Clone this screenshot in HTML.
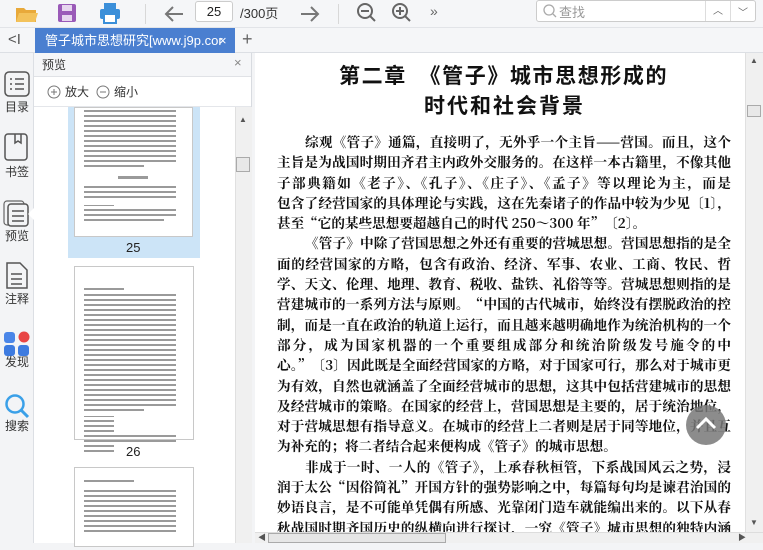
<!DOCTYPE html>
<html><head><meta charset="utf-8"><style>
*{margin:0;padding:0;box-sizing:border-box}
body{width:763px;height:543px;overflow:hidden;background:#f3f4f6;font-family:"Liberation Sans","Noto Sans CJK SC",sans-serif;position:relative}
.abs{position:absolute}
.tb{left:0;top:0;width:763px;height:28px;background:#f5f6f8;border-bottom:1px solid #e2e4e8}
.tabbar{left:0;top:28px;width:763px;height:25px;background:#f5f6f8;border-bottom:1px solid #dcdfe4}
.tab{left:35px;top:28px;width:200px;height:25px;background:#4a7fd0;color:#fff;font-size:13px;line-height:25px;padding-left:10px;white-space:nowrap;overflow:hidden}
.side{left:0;top:53px;width:34px;height:490px;background:#f3f4f6;border-right:1px solid #dcdfe4}
.side .lb{position:absolute;left:0;width:34px;text-align:center;font-size:12px;color:#333}
.panel{left:34px;top:53px;width:218px;height:490px;background:#fff;border-right:1px solid #d8dbe0}
.content{left:255px;top:53px;width:490px;height:479px;background:#fff}
.txt{position:absolute;left:277px;width:454px;font-family:"Noto Serif CJK SC","Liberation Serif",serif;font-weight:bold;font-size:13.6px;color:#111;line-height:20.3px}
.txt div{text-align:justify;text-align-last:justify;white-space:nowrap;height:20.3px;overflow:hidden}
.txt div.i{padding-left:28px}
.txt div.n{text-align-last:left}
.h{position:absolute;font-family:"Noto Sans CJK SC",sans-serif;font-weight:bold;font-size:21px;color:#111;white-space:nowrap}
.thumb{position:absolute;background:#fff;border:1px solid #c8c8c8}
</style></head><body>
<div class="abs tb"></div>
<svg class="abs" style="left:14px;top:2px" width="26" height="22"><path d="M2 6h8l2 2h10v12H2z" fill="#e8a93a"/><path d="M5 11h19l-3 9H2z" fill="#f3c25b"/></svg>
<svg class="abs" style="left:57px;top:3px" width="20" height="20"><rect x="1" y="1" width="18" height="18" rx="2" fill="#9a5ab8"/><rect x="5" y="2" width="10" height="6" fill="#e7d6ef"/><rect x="5" y="12" width="10" height="6" fill="#e7d6ef"/></svg>
<svg class="abs" style="left:99px;top:2px" width="22" height="22"><rect x="5" y="1" width="12" height="6" fill="#3b8fd9"/><rect x="1" y="7" width="20" height="10" rx="2" fill="#3b8fd9"/><rect x="5" y="12" width="12" height="9" fill="#fff" stroke="#3b8fd9" stroke-width="2"/></svg>
<div class="abs" style="left:145px;top:4px;width:1px;height:20px;background:#d8d8d8"></div>
<svg class="abs" style="left:163px;top:4px" width="22" height="20"><path d="M20 10H3M10 3L3 10l7 7" fill="none" stroke="#777" stroke-width="2"/></svg>
<div class="abs" style="left:195px;top:1px;width:38px;height:21px;border:1px solid #ccc;border-radius:3px;background:#fff;font-size:13px;text-align:center;line-height:19px;color:#222">25</div>
<div class="abs" style="left:240px;top:3px;font-size:13px;color:#333">/300页</div>
<svg class="abs" style="left:299px;top:4px" width="22" height="20"><path d="M2 10h17M12 3l7 7-7 7" fill="none" stroke="#777" stroke-width="2"/></svg>
<div class="abs" style="left:338px;top:4px;width:1px;height:20px;background:#d8d8d8"></div>
<svg class="abs" style="left:356px;top:2px" width="22" height="22"><circle cx="9" cy="9" r="7" fill="none" stroke="#666" stroke-width="2"/><path d="M5 9h8M14 14l5 5" stroke="#666" stroke-width="2"/></svg>
<svg class="abs" style="left:391px;top:2px" width="22" height="22"><circle cx="9" cy="9" r="7" fill="none" stroke="#666" stroke-width="2"/><path d="M5 9h8M9 5v8M14 14l5 5" stroke="#666" stroke-width="2"/></svg>
<div class="abs" style="left:430px;top:3px;font-size:14px;color:#666">»</div>
<div class="abs" style="left:536px;top:0px;width:220px;height:22px;border:1px solid #ccc;border-radius:3px;background:#fff"></div>
<svg class="abs" style="left:542px;top:3px" width="16" height="16"><circle cx="7" cy="7" r="5" fill="none" stroke="#aaa" stroke-width="1.3"/><path d="M11 11l3 3" stroke="#aaa" stroke-width="1.3"/></svg>
<div class="abs" style="left:559px;top:2px;font-size:13px;color:#999">查找</div>
<div class="abs" style="left:705px;top:1px;width:1px;height:20px;background:#ddd"></div>
<div class="abs" style="left:730px;top:1px;width:1px;height:20px;background:#ddd"></div>
<div class="abs" style="left:713px;top:2px;font-size:10px;color:#666">︿</div>
<div class="abs" style="left:738px;top:4px;font-size:10px;color:#666">﹀</div>

<div class="abs tabbar"></div>
<div class="abs" style="left:8px;top:31px;font-size:15px;color:#555">&lt;I</div>
<div class="abs tab">管子城市思想研究[www.j9p.cor <span style="position:absolute;left:184px">×</span></div>
<div class="abs" style="left:242px;top:29px;font-size:18px;color:#666">+</div>

<div class="abs side">
<svg class="abs" style="left:4px;top:18px" width="26" height="26"><rect x="1" y="1" width="24" height="24" rx="4" fill="none" stroke="#555" stroke-width="1.5"/><path d="M6 8h2M11 8h9M6 13h2M11 13h9M6 18h2M11 18h9" stroke="#555" stroke-width="1.6"/></svg>
<div class="lb" style="top:45px">目录</div>
<svg class="abs" style="left:4px;top:80px" width="26" height="28"><rect x="1" y="1" width="22" height="26" rx="3" fill="none" stroke="#555" stroke-width="1.5"/><path d="M11 1v9l3-2 3 2V1" fill="none" stroke="#555" stroke-width="1.5"/></svg>
<div class="lb" style="top:110px">书签</div>
<svg class="abs" style="left:3px;top:147px" width="28" height="28"><rect x="1" y="1" width="20" height="24" rx="3" fill="none" stroke="#666" stroke-width="1.2"/><rect x="5" y="4" width="20" height="22" rx="3" fill="#f3f4f6" stroke="#555" stroke-width="1.5"/><path d="M9 11h12M9 16h12M9 21h12" stroke="#555" stroke-width="1.5"/></svg>
<div class="abs" style="left:28px;top:155px;width:0;height:0;border-top:6px solid transparent;border-bottom:6px solid transparent;border-right:6px solid #fff"></div>
<div class="lb" style="top:174px">预览</div>
<svg class="abs" style="left:5px;top:209px" width="24" height="28"><path d="M2 1h13l7 7v18H2z" fill="none" stroke="#555" stroke-width="1.5"/><path d="M6 12h11M6 17h11M6 22h11" stroke="#555" stroke-width="1.5"/></svg>
<div class="lb" style="top:237px">注释</div>
<svg class="abs" style="left:3px;top:278px" width="28" height="26"><rect x="1" y="1" width="11" height="11" rx="3" fill="#4a86e8"/><circle cx="21" cy="6" r="5.5" fill="#e84545"/><rect x="1" y="14" width="11" height="11" rx="3" fill="#3d7be0"/><rect x="15" y="14" width="11" height="11" rx="3" fill="#3d7be0"/></svg>
<div class="lb" style="top:300px">发现</div>
<svg class="abs" style="left:4px;top:340px" width="26" height="26"><circle cx="11" cy="11" r="8.5" fill="none" stroke="#3aa0e8" stroke-width="2.5"/><path d="M17 17l7 7" stroke="#3aa0e8" stroke-width="3"/></svg>
<div class="lb" style="top:364px">搜索</div>
</div>

<div class="abs panel">
<div class="abs" style="left:0;top:0;width:217px;height:24px;background:#f5f6f8;border-bottom:1px solid #e0e2e6"></div>
<div class="abs" style="left:8px;top:3px;font-size:12px;color:#333">预览</div>
<div class="abs" style="left:200px;top:2px;font-size:13px;color:#888">×</div>
<svg class="abs" style="left:13px;top:32px" width="14" height="14"><circle cx="7" cy="7" r="6" fill="none" stroke="#777"/><path d="M4 7h6M7 4v6" stroke="#777"/></svg>
<div class="abs" style="left:31px;top:30px;font-size:12px;color:#333">放大</div>
<svg class="abs" style="left:62px;top:32px" width="14" height="14"><circle cx="7" cy="7" r="6" fill="none" stroke="#777"/><path d="M4 7h6" stroke="#777"/></svg>
<div class="abs" style="left:80px;top:30px;font-size:12px;color:#333">缩小</div>
<div class="abs" style="left:0;top:53px;width:217px;height:1px;background:#e4e6ea"></div>
<div class="abs" style="left:34px;top:54px;width:132px;height:151px;background:#cce4f7"></div>
<div class="thumb" style="left:40px;top:54px;width:119px;height:130px"></div>
<div class="abs" style="left:92px;top:187px;font-size:13px;color:#222">25</div>
<div class="thumb" style="left:40px;top:213px;width:120px;height:174px"></div>
<div class="abs" style="left:92px;top:391px;font-size:13px;color:#222">26</div>
<div class="thumb" style="left:40px;top:414px;width:120px;height:80px"></div>
<div class="abs" style="left:201px;top:54px;width:17px;height:436px;background:#f0f0f0;border-left:1px solid #e0e0e0"></div>
<div class="abs" style="left:202px;top:104px;width:14px;height:15px;background:#e8e8e8;border:1px solid #aaa"></div>
<div class="abs" style="left:205px;top:62px;font-size:8px;color:#555">▲</div>
</div>
<svg class="abs" style="left:80px;top:110px" width="110" height="440">
<g fill="#9a9a9a">
<rect x="4" y="0" width="92" height="2"/><rect x="4" y="5" width="92" height="2"/><rect x="4" y="10" width="92" height="2"/><rect x="4" y="15" width="92" height="2"/><rect x="4" y="20" width="92" height="2"/><rect x="4" y="25" width="92" height="2"/><rect x="4" y="30" width="92" height="2"/><rect x="4" y="35" width="92" height="2"/><rect x="4" y="40" width="92" height="2"/><rect x="4" y="45" width="92" height="2"/><rect x="4" y="50" width="92" height="2"/><rect x="4" y="55" width="60" height="2"/>
<rect x="38" y="66" width="30" height="3"/>
<rect x="4" y="76" width="92" height="2"/><rect x="4" y="81" width="92" height="2"/><rect x="4" y="86" width="92" height="2"/>
<rect x="4" y="95" width="30" height="1"/>
<rect x="4" y="99" width="92" height="2"/><rect x="4" y="104" width="92" height="2"/><rect x="4" y="109" width="80" height="2"/>
<rect x="4" y="178" width="40" height="2"/><rect x="4" y="184" width="92" height="2"/><rect x="4" y="189" width="92" height="2"/><rect x="4" y="194" width="92" height="2"/><rect x="4" y="199" width="92" height="2"/><rect x="4" y="204" width="92" height="2"/><rect x="4" y="209" width="92" height="2"/><rect x="4" y="214" width="92" height="2"/><rect x="4" y="219" width="92" height="2"/><rect x="4" y="224" width="92" height="2"/><rect x="4" y="229" width="92" height="2"/><rect x="4" y="234" width="92" height="2"/><rect x="4" y="239" width="92" height="2"/><rect x="4" y="244" width="92" height="2"/><rect x="4" y="249" width="92" height="2"/><rect x="4" y="254" width="92" height="2"/><rect x="4" y="259" width="92" height="2"/><rect x="4" y="264" width="92" height="2"/><rect x="4" y="269" width="92" height="2"/><rect x="4" y="274" width="92" height="2"/><rect x="4" y="279" width="92" height="2"/><rect x="4" y="284" width="92" height="2"/><rect x="4" y="289" width="92" height="2"/><rect x="4" y="294" width="92" height="2"/><rect x="4" y="299" width="60" height="2"/>
<rect x="4" y="306" width="30" height="1"/><rect x="4" y="310" width="30" height="2"/><rect x="4" y="315" width="30" height="2"/><rect x="4" y="320" width="30" height="2"/><rect x="4" y="325" width="92" height="2"/><rect x="4" y="330" width="92" height="2"/><rect x="4" y="335" width="30" height="2"/><rect x="4" y="340" width="30" height="2"/>
<rect x="4" y="370" width="50" height="2"/><rect x="4" y="380" width="92" height="2"/><rect x="4" y="385" width="92" height="2"/><rect x="4" y="390" width="92" height="2"/><rect x="4" y="395" width="92" height="2"/><rect x="4" y="400" width="92" height="2"/><rect x="4" y="405" width="92" height="2"/><rect x="4" y="410" width="92" height="2"/><rect x="4" y="415" width="92" height="2"/><rect x="4" y="420" width="92" height="2"/>
</g></svg>

<div class="abs content"></div>
<div class="h" style="left:339px;top:60px;letter-spacing:1.6px">第二章&nbsp;&nbsp;《管子》城市思想形成的</div>
<div class="h" style="left:424px;top:90px;letter-spacing:2px">时代和社会背景</div>
<div class="txt" style="top:131px">
<div class="i">综观《管子》通篇，直接明了，无外乎一个主旨——营国。而且，这个</div>
<div>主旨是为战国时期田齐君主内政外交服务的。在这样一本古籍里，不像其他</div>
<div>子部典籍如《老子》、《孔子》、《庄子》、《孟子》等以理论为主，而是</div>
<div>包含了经营国家的具体理论与实践，这在先秦诸子的作品中较为少见〔1〕，</div>
<div class="n">甚至“它的某些思想要超越自己的时代 250～300 年”〔2〕。</div>
<div class="i">《管子》中除了营国思想之外还有重要的营城思想。营国思想指的是全</div>
<div>面的经营国家的方略，包含有政治、经济、军事、农业、工商、牧民、哲</div>
<div>学、天文、伦理、地理、教育、税收、盐铁、礼俗等等。营城思想则指的是</div>
<div>营建城市的一系列方法与原则。“中国的古代城市，始终没有摆脱政治的控</div>
<div>制，而是一直在政治的轨道上运行，而且越来越明确地作为统治机构的一个</div>
<div>部分，成为国家机器的一个重要组成部分和统治阶级发号施令的中</div>
<div>心。”〔3〕因此既是全面经营国家的方略，对于国家可行，那么对于城市更</div>
<div>为有效，自然也就涵盖了全面经营城市的思想，这其中包括营建城市的思想</div>
<div>及经营城市的策略。在国家的经营上，营国思想是主要的，居于统治地位，</div>
<div>对于营城思想有指导意义。在城市的经营上二者则是居于同等地位，并且互</div>
<div class="n">为补充的；将二者结合起来便构成《管子》的城市思想。</div>
<div class="i">非成于一时、一人的《管子》，上承春秋桓管，下系战国风云之势，浸</div>
<div>润于太公“因俗简礼”开国方针的强势影响之中，每篇每句均是谏君治国的</div>
<div>妙语良言，是不可能单凭偶有所感、光靠闭门造车就能编出来的。以下从春</div>
<div>秋战国时期齐国历史的纵横向进行探讨，一究《管子》城市思想的独特内涵</div>
</div>
<div class="abs" style="left:686px;top:405px;width:40px;height:40px;border-radius:50%;background:rgba(120,120,120,0.85)"></div>
<svg class="abs" style="left:694px;top:415px" width="24" height="16"><path d="M3 13l9-9 9 9" fill="none" stroke="#fff" stroke-width="3"/></svg>
<div class="abs" style="left:745px;top:53px;width:18px;height:479px;background:#f0f0f0;border-left:1px solid #e0e0e0"></div>
<div class="abs" style="left:750px;top:56px;font-size:8px;color:#555">▲</div>
<div class="abs" style="left:750px;top:518px;font-size:8px;color:#555">▼</div>
<div class="abs" style="left:747px;top:105px;width:14px;height:12px;background:#e8e8e8;border:1px solid #aaa"></div>
<div class="abs" style="left:255px;top:532px;width:508px;height:11px;background:#f0f0f0;border-top:1px solid #ddd"></div>
<div class="abs" style="left:268px;top:533px;width:178px;height:10px;background:#e6e6e6;border:1px solid #aaa"></div>
<div class="abs" style="left:258px;top:532px;font-size:8px;color:#555">◀</div>
<div class="abs" style="left:738px;top:532px;font-size:8px;color:#555">▶</div>
</body></html>
